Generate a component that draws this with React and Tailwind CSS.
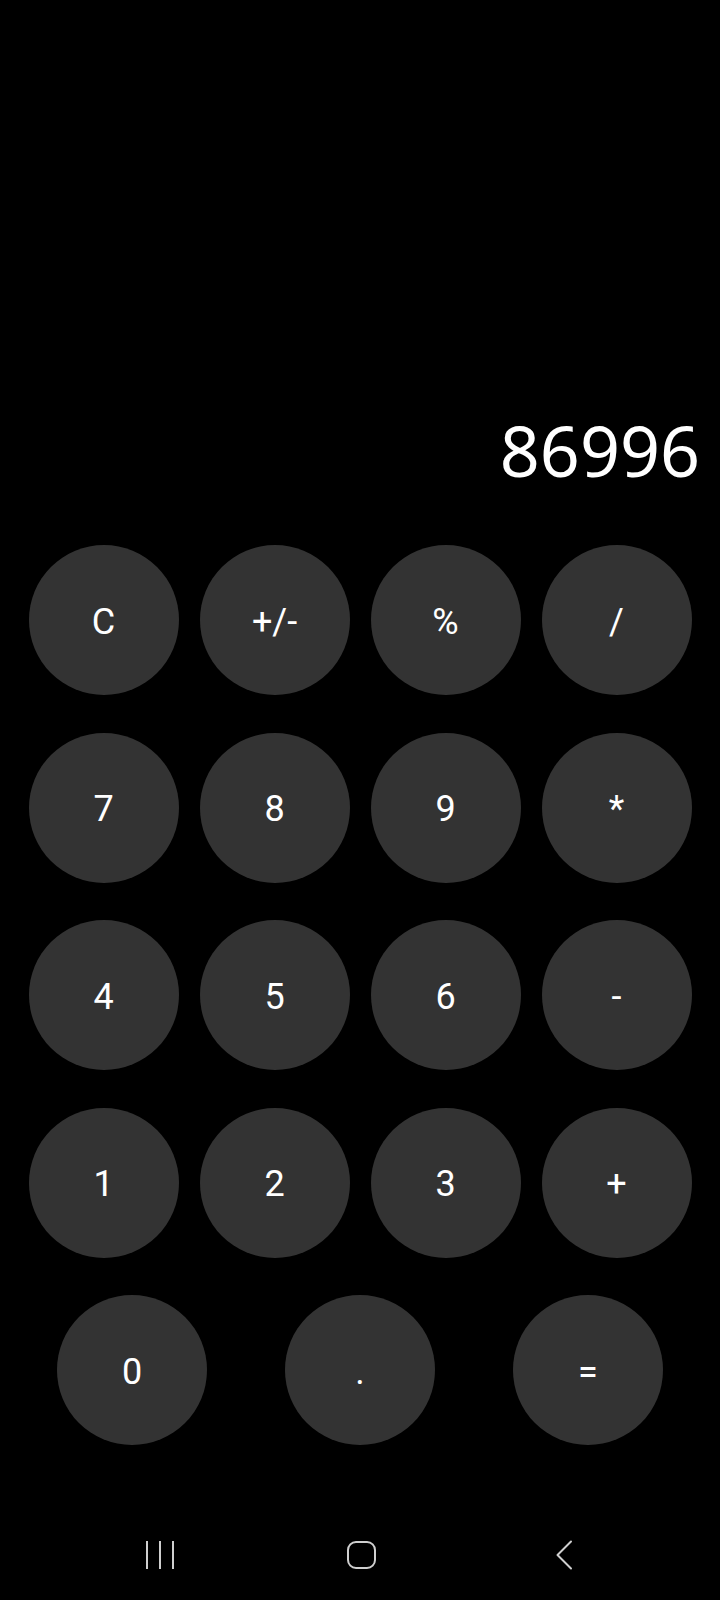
import React from "react";

const rows = [
  ["C", "+/-", "%", "/"],
  ["7", "8", "9", "*"],
  ["4", "5", "6", "-"],
  ["1", "2", "3", "+"],
  ["0", ".", "="],
];

const KeyButton = ({ label }) => (
  <div className="flex-1 flex justify-center">
    <button className="w-[150px] h-[150px] rounded-full bg-[#333333] text-white text-[36px] pt-[3px] flex items-center justify-center font-['Roboto',sans-serif]">
      {label}
    </button>
  </div>
);

const NavBar = () => (
  <div className="flex items-center justify-center h-[90px] pl-[3px]">
    {/* Recents */}
    <div className="w-[202px] flex justify-center">
      <div className="flex gap-[11px] h-[28px]">
        <div className="w-[2px] h-full bg-[#cfcfcf]" />
        <div className="w-[2px] h-full bg-[#cfcfcf]" />
        <div className="w-[2px] h-full bg-[#cfcfcf]" />
      </div>
    </div>
    {/* Home */}
    <div className="w-[202px] flex justify-center">
      <div className="w-[29px] h-[28px] rounded-[9px] border-2 border-[#cfcfcf]" />
    </div>
    {/* Back */}
    <div className="w-[202px] flex justify-center">
      <svg width="18" height="30" viewBox="0 0 18 30" fill="none">
        <path d="M16 1.5 L2.5 15 L16 28.5" stroke="#cfcfcf" strokeWidth="2" strokeLinecap="round" strokeLinejoin="round" />
      </svg>
    </div>
  </div>
);

export default function App() {
  return (
    <div className="w-[720px] h-[1600px] bg-black flex flex-col">
      {/* Display */}
      <div className="pt-[415px] px-[20px] flex justify-end">
        <span className="text-white text-[70px] leading-[70px] font-['Noto_Sans',sans-serif]">
          86996
        </span>
      </div>

      {/* Keypad */}
      <div className="mt-[60px] px-[18px] flex flex-col gap-[37.5px]">
        {rows.map((row, i) => (
          <div key={i} className="flex">
            {row.map((k) => (
              <KeyButton key={k} label={k} />
            ))}
          </div>
        ))}
      </div>

      <div className="flex-1" />
      <NavBar />
    </div>
  );
}
